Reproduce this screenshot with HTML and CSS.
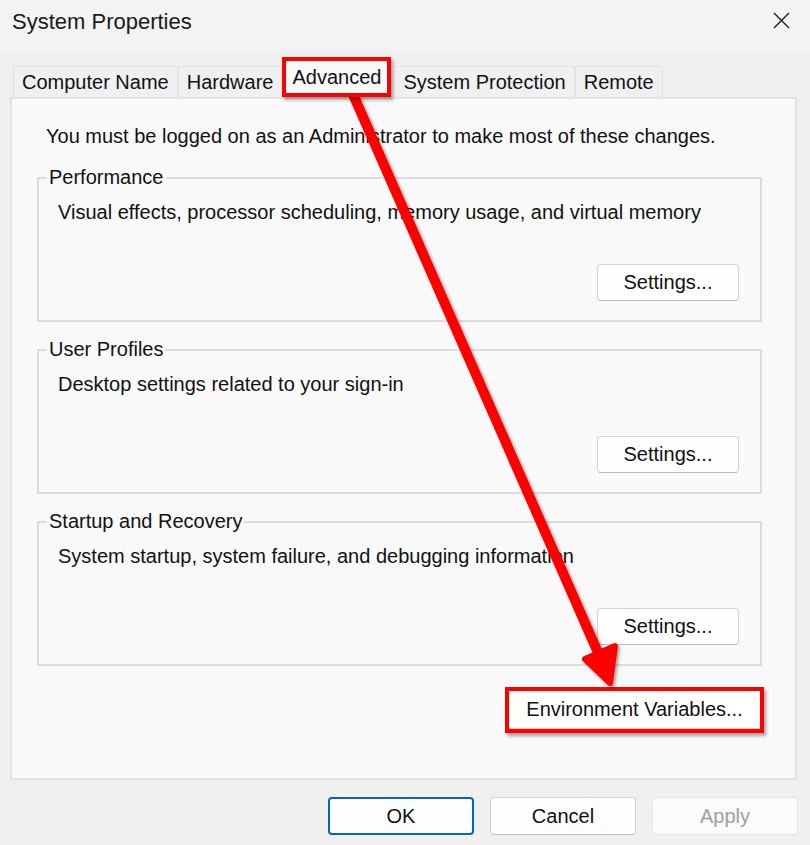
FILE: index.html
```html
<!DOCTYPE html>
<html lang="en">
<head>
<meta charset="UTF-8">
<meta name="viewport" content="width=device-width, initial-scale=1.0">
<title>System Properties</title>
<link rel="stylesheet" href="styles.css">
</head>
<body>
<div class="window">
    <div class="titlebar">
        <span class="title">System Properties</span>
        <svg class="close" width="17" height="17" viewBox="0 0 17 17">
            <path d="M1 1 L16 16 M16 1 L1 16" stroke="#1a1a1a" stroke-width="1.4" fill="none"/>
        </svg>
    </div>
    <div class="tabs">
        <div class="tab">Computer Name</div>
        <div class="tab">Hardware</div>
        <div class="tab active marked">Advanced</div>
        <div class="tab">System Protection</div>
        <div class="tab">Remote</div>
    </div>
    <div class="panel">
        <p class="note">You must be logged on as an Administrator to make most of these changes.</p>
        <div class="group">
            <span class="group-title">Performance</span>
            <p class="group-desc">Visual effects, processor scheduling, memory usage, and virtual memory</p>
            <button class="btn settings-btn">Settings...</button>
        </div>
        <div class="group">
            <span class="group-title">User Profiles</span>
            <p class="group-desc">Desktop settings related to your sign-in</p>
            <button class="btn settings-btn">Settings...</button>
        </div>
        <div class="group">
            <span class="group-title">Startup and Recovery</span>
            <p class="group-desc">System startup, system failure, and debugging information</p>
            <button class="btn settings-btn">Settings...</button>
        </div>
        <div class="env-mark">
            <button class="btn env-btn">Environment Variables...</button>
        </div>
    </div>
    <div class="footer">
        <button class="btn btn-default">OK</button>
        <button class="btn">Cancel</button>
        <button class="btn" disabled>Apply</button>
    </div>
    <!-- annotation arrow drawn over the dialog -->
    <svg class="arrow" width="810" height="845" viewBox="0 0 810 845">
        <defs>
            <filter id="shadow" x="-10%" y="-10%" width="130%" height="130%">
                <feDropShadow dx="2" dy="2" stdDeviation="1.5" flood-color="#000" flood-opacity="0.35"/>
            </filter>
        </defs>
        <g filter="url(#shadow)" fill="#ff0000" stroke="#ff0000">
            <line x1="352" y1="92" x2="603" y2="664" stroke-width="10" stroke-linecap="round"/>
            <polygon points="585,659 615,646 610,683" stroke-width="6" stroke-linejoin="round"/>
        </g>
    </svg>
</div>
</body>
</html>
```

FILE: styles.css
```css
body {
    margin: 0;
    padding: 0;
    background-color: #f0f0f0;
    font-family: "Liberation Sans", Arial, sans-serif;
    font-size: 20px;
    color: #111;
}
.window {
    position: relative;
    width: 810px;
    height: 845px;
    overflow: hidden;
}
.titlebar {
    height: 50px;
    background-color: #f3f3f3;
    display: flex;
    align-items: flex-start;
    justify-content: space-between;
    padding: 9px 20px 0 12px;
    box-sizing: border-box;
}
.title {
    font-size: 22px;
    line-height: 26px;
    color: #1a1a1a;
}
.close {
    margin-top: 3px;
}
.tabs {
    display: flex;
    align-items: flex-end;
    height: 40px;
    margin-top: 7px;
    padding-left: 13px;
}
.tab {
    height: 31px;
    box-sizing: border-box;
    padding: 0 8px;
    border: 1px solid #e3e3e3;
    border-bottom: none;
    display: flex;
    align-items: center;
    background-color: #f0f0f0;
}
.tab.active {
    background-color: #f9f9f9;
}
.tab.marked {
    height: 40px;
    border: 4px solid #ff0000;
    padding: 0 6px;
    margin-right: 3px;
    position: relative;
    z-index: 1;
    box-shadow: 2px 3px 3px rgba(0, 0, 0, 0.35);
}
.panel {
    margin-left: 10px;
    width: 787px;
    height: 683px;
    box-sizing: border-box;
    border: 2px solid #e3e3e3;
    background-color: #f9f9f9;
    display: flex;
    flex-direction: column;
}
.note {
    margin: 27px 0 0 34px;
    line-height: 20px;
}
.group {
    margin: 31px 0 0 25px;
    width: 725px;
    height: 145px;
    box-sizing: border-box;
    border: 2px solid #dcdcdc;
    display: flex;
    flex-direction: column;
}
.group + .group {
    margin-top: 27px;
}
.group-title {
    align-self: flex-start;
    margin: -13px 0 0 8px;
    padding: 0 2px;
    line-height: 22px;
    background-color: #f9f9f9;
}
.group-desc {
    margin: 13px 0 0 19px;
    line-height: 22px;
}
.btn {
    font-family: "Liberation Sans", Arial, sans-serif;
    font-size: 20px;
    color: #111;
    width: 146px;
    height: 38px;
    background-color: #fdfdfd;
    border: 1px solid #d3d3d3;
    border-bottom-color: #bdbdbd;
    border-radius: 4px;
    padding: 0;
}
.settings-btn {
    width: 142px;
    height: 37px;
    align-self: flex-end;
    margin: auto 21px 19px 0;
}
.env-mark {
    align-self: flex-end;
    margin: 21px 31px 0 0;
    border: 4px solid #ff0000;
    box-shadow: 2px 3px 3px rgba(0, 0, 0, 0.35);
    background-color: #fff;
}
.env-btn {
    display: block;
    width: 251px;
    height: 38px;
    border: none;
    border-bottom: 1px solid #c8c8c8;
    border-radius: 0;
    background-color: #fff;
}
.footer {
    display: flex;
    justify-content: flex-end;
    gap: 16px;
    margin-top: 17px;
    padding-right: 12px;
}
.btn-default {
    border: 2px solid #0067c0;
}
.btn:disabled {
    color: #a0a0a0;
    background-color: #fbfbfb;
    border-color: #e5e5e5;
}
.arrow {
    position: absolute;
    left: 0;
    top: 0;
    pointer-events: none;
}
```
